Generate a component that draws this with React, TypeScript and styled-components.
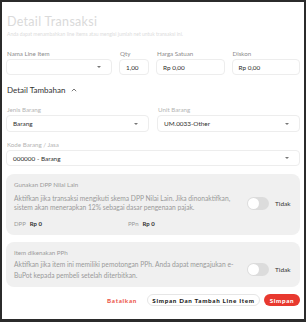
import styled, { createGlobalStyle } from "styled-components";

const GlobalStyle = createGlobalStyle`
  html, body {
    margin: 0;
    padding: 0;
  }
  * {
    box-sizing: border-box;
  }
`;

const Frame = styled.div`
  width: 306px;
  height: 322px;
  background-color: #2b2b2b;
  padding: 2px 2px 3px 2px;
  font-family: "Lato", "Noto Sans", sans-serif;
`;

const Panel = styled.div`
  height: 100%;
  background-color: #ffffff;
  padding: 0 4px;
  display: flex;
  flex-direction: column;
  overflow: hidden;
`;

const Title = styled.h1`
  margin: 13px 0 0 1px;
  font-size: 12.5px;
  line-height: 14px;
  font-weight: 400;
  color: #dadada;
  letter-spacing: 0.3px;
`;

const Subtitle = styled.p`
  margin: 2px 0 0 1px;
  font-size: 5px;
  line-height: 7px;
  color: #dcdcdc;
`;

const Grid = styled.div<{ $cols: string; $top: number; $gap: number }>`
  display: grid;
  grid-template-columns: ${(p) => p.$cols};
  column-gap: ${(p) => p.$gap}px;
  margin-top: ${(p) => p.$top}px;
`;

const Field = styled.div`
  display: flex;
  flex-direction: column;
  min-width: 0;
`;

const Label = styled.label<{ $light?: boolean }>`
  font-size: 6.2px;
  line-height: 8px;
  margin: 0 0 1px 1px;
  color: ${(p) => (p.$light ? "#b4b4b4" : "#8c8c8c")};
`;

const Input = styled.div<{ $h: number }>`
  height: ${(p) => p.$h}px;
  border: 1px solid #ededed;
  border-radius: 4px;
  display: flex;
  align-items: center;
  justify-content: space-between;
  padding: 0 6px;
  font-size: 6.4px;
  color: #2e2e2e;
`;

const Caret = styled.span`
  width: 0;
  height: 0;
  border-left: 2.5px solid transparent;
  border-right: 2.5px solid transparent;
  border-top: 2.5px solid #777777;
  margin-right: 4px;
`;

const SectionHead = styled.div`
  display: flex;
  align-items: center;
  gap: 6px;
  margin: 10px 0 0 1px;
  font-size: 8px;
  line-height: 10px;
  color: #333333;
`;

const Card = styled.div<{ $top: number }>`
  margin-top: ${(p) => p.$top}px;
  background-color: #f0f0f0;
  border-radius: 8px;
  padding: 7px 7px 7px 8px;
`;

const CardTitle = styled.div`
  font-size: 6.2px;
  line-height: 8px;
  color: #9a9a9a;
`;

const CardRow = styled.div<{ $top: number }>`
  display: flex;
  align-items: center;
  margin-top: ${(p) => p.$top}px;
`;

const Desc = styled.p<{ $lh: number }>`
  margin: 0;
  width: 222px;
  font-size: 6.7px;
  line-height: ${(p) => p.$lh}px;
  color: #9a9a9a;
`;

const Toggle = styled.span`
  margin-left: 11px;
  width: 22px;
  height: 13px;
  border-radius: 7px;
  background-color: #dcdcdc;
  display: flex;
  align-items: center;
  padding: 1px;
  &::before {
    content: "";
    width: 11px;
    height: 11px;
    border-radius: 50%;
    background-color: #ffffff;
  }
`;

const ToggleText = styled.span`
  margin-left: 6px;
  font-size: 6.5px;
  color: #333333;
`;

const Totals = styled.div`
  display: grid;
  grid-template-columns: 114px 1fr;
  margin-top: 8px;
  font-size: 6px;
  line-height: 8px;
`;

const Total = styled.span`
  color: #9a9a9a;
  b {
    color: #333333;
    font-weight: 700;
    margin-left: 4px;
  }
`;

const Actions = styled.div`
  display: flex;
  justify-content: flex-end;
  align-items: center;
  gap: 4px;
  margin-top: 7px;
`;

const Button = styled.button<{ $variant: "text" | "outline" | "primary" }>`
  height: 12px;
  border-radius: 6px;
  font-family: "Lato", "Noto Sans", sans-serif;
  font-size: 6.2px;
  font-weight: 900;
  letter-spacing: 0.7px;
  display: flex;
  align-items: center;
  justify-content: center;
  white-space: nowrap;
  cursor: pointer;
  border: 1px solid
    ${(p) => (p.$variant === "outline" ? "#e6e6e6" : "transparent")};
  background-color: ${(p) =>
    p.$variant === "primary" ? "#e8392f" : "#ffffff"};
  color: ${(p) =>
    p.$variant === "primary"
      ? "#ffffff"
      : p.$variant === "text"
      ? "#ec5a4f"
      : "#222222"};
  padding: ${(p) => (p.$variant === "text" ? "0 5px" : "0 4px")};
  width: ${(p) =>
    p.$variant === "outline" ? "113px" : p.$variant === "primary" ? "36px" : "auto"};
`;

function ChevronUp() {
  return (
    <svg width="6" height="4" viewBox="0 0 6 4" fill="none">
      <path d="M0.8 3.2 L3 1 L5.2 3.2" stroke="#555" strokeWidth="0.8" />
    </svg>
  );
}

export default function App() {
  return (
    <Frame>
      <GlobalStyle />
      <Panel>
        <Title>Detail Transaksi</Title>
        <Subtitle>
          Anda dapat menambahkan line items atau mengisi jumlah net untuk transaksi ini.
        </Subtitle>

        <Grid $cols="106px 30px 1fr 1fr" $gap={7} $top={12}>
          <Field>
            <Label>Nama Line Item</Label>
            <Input $h={16}>
              <span />
              <Caret />
            </Input>
          </Field>
          <Field>
            <Label>Qty</Label>
            <Input $h={16}>1,00</Input>
          </Field>
          <Field>
            <Label>Harga Satuan</Label>
            <Input $h={16}>Rp 0,00</Input>
          </Field>
          <Field>
            <Label>Diskon</Label>
            <Input $h={16}>Rp 0,00</Input>
          </Field>
        </Grid>

        <SectionHead>
          Detail Tambahan
          <ChevronUp />
        </SectionHead>

        <Grid $cols="1fr 1fr" $gap={8} $top={11}>
          <Field>
            <Label $light>Jenis Barang</Label>
            <Input $h={17}>
              Barang
              <Caret />
            </Input>
          </Field>
          <Field>
            <Label $light>Unit Barang</Label>
            <Input $h={17}>
              UM.0033-Other
              <Caret />
            </Input>
          </Field>
        </Grid>

        <Grid $cols="1fr" $gap={0} $top={9}>
          <Field>
            <Label $light>Kode Barang / Jasa</Label>
            <Input $h={16}>
              000000 - Barang
              <Caret />
            </Input>
          </Field>
        </Grid>

        <Card $top={8}>
          <CardTitle>Gunakan DPP Nilai Lain</CardTitle>
          <CardRow $top={5}>
            <Desc $lh={9}>
              Aktifkan jika transaksi mengikuti skema DPP Nilai Lain. Jika dinonaktifkan,
              sistem akan menerapkan 12% sebagai dasar pengenaan pajak.
            </Desc>
            <Toggle />
            <ToggleText>Tidak</ToggleText>
          </CardRow>
          <Totals>
            <Total>
              DPP<b>Rp 0</b>
            </Total>
            <Total>
              PPn<b>Rp 0</b>
            </Total>
          </Totals>
        </Card>

        <Card $top={7}>
          <CardTitle>Item dikenakan PPh</CardTitle>
          <CardRow $top={2}>
            <Desc $lh={10.5}>
              Aktifkan jika item ini memiliki pemotongan PPh. Anda dapat mengajukan e-BuPot
              kepada pembeli setelah diterbitkan.
            </Desc>
            <Toggle />
            <ToggleText>Tidak</ToggleText>
          </CardRow>
        </Card>

        <Actions>
          <Button $variant="text">Batalkan</Button>
          <Button $variant="outline">Simpan Dan Tambah Line Item</Button>
          <Button $variant="primary">Simpan</Button>
        </Actions>
      </Panel>
    </Frame>
  );
}
